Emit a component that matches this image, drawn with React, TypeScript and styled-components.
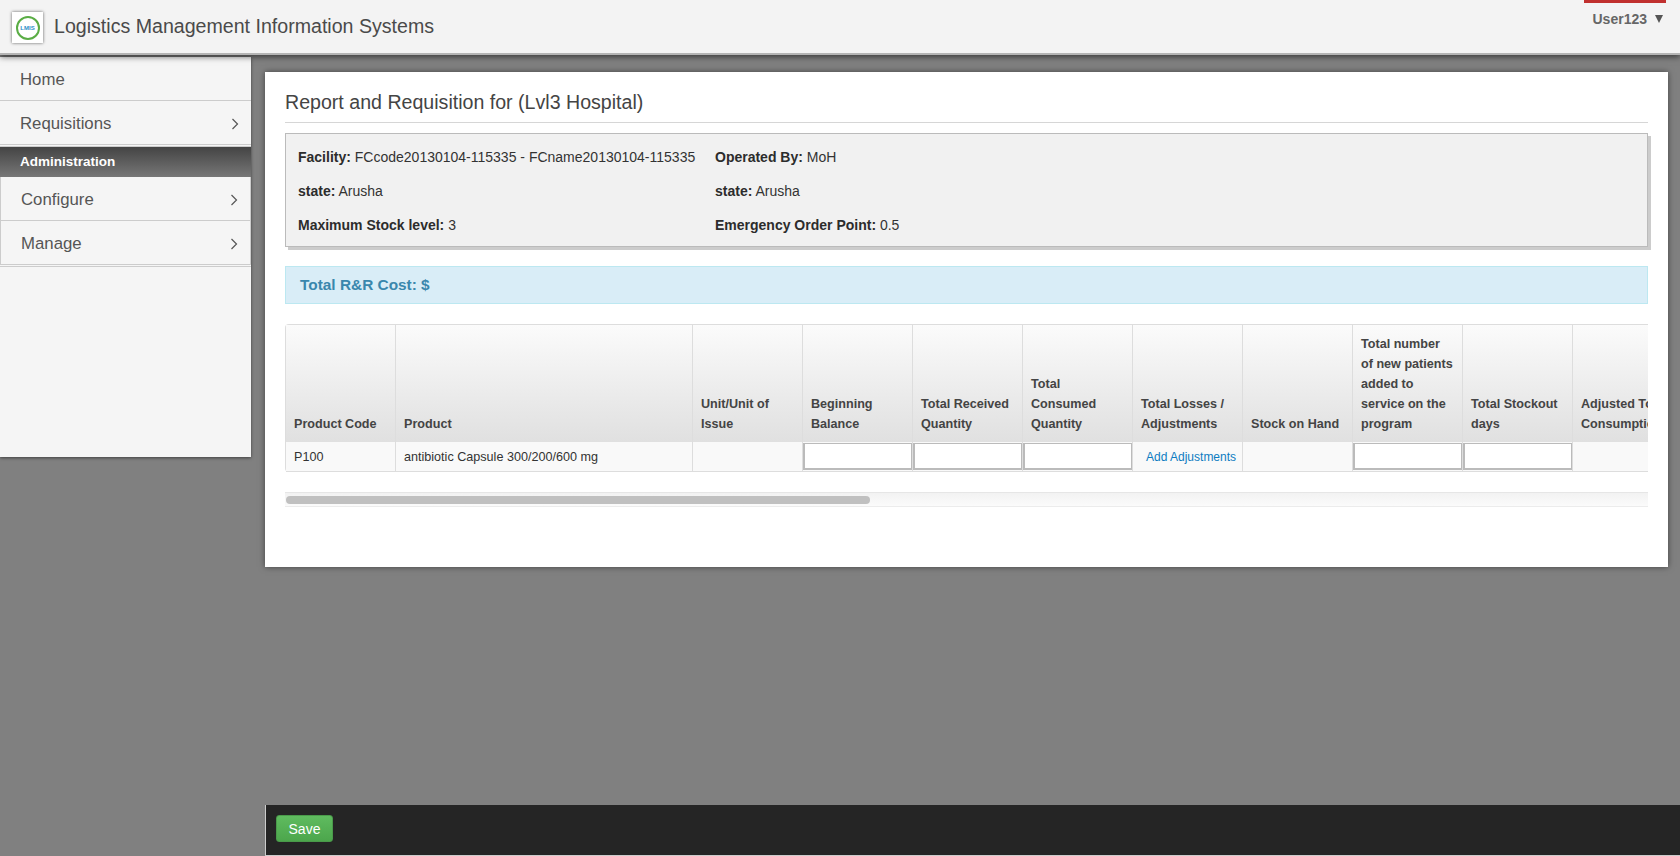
import React from "react";
import styled, { createGlobalStyle } from "styled-components";

const Global = createGlobalStyle`
  html, body { margin: 0; padding: 0; height: 100%; }
  body { background: #808080; font-family: "Liberation Sans", Arial, sans-serif; color: #333; overflow: hidden; }
`;

const Page = styled.div`
  display: flex;
  flex-direction: column;
  height: 856px;
  width: 1680px;
  overflow: hidden;
`;

const Header = styled.header`
  position: relative;
  z-index: 3;
  flex: none;
  height: 53px;
  display: flex;
  align-items: flex-start;
  background: #f3f3f3;
  border-bottom: 2px solid #b4b4b4;
  box-shadow: 0 2px 6px rgba(0, 0, 0, 0.55);
`;

const LogoTile = styled.div`
  margin: 12px 0 0 12px;
  width: 31px;
  height: 31px;
  background: #fff;
  box-shadow: 0 0 3px rgba(0, 0, 0, 0.6);
  display: flex;
  align-items: center;
  justify-content: center;
`;

const LogoRing = styled.div`
  width: 24px;
  height: 24px;
  box-sizing: border-box;
  border: 2.5px solid #5aad45;
  border-radius: 50%;
  display: flex;
  align-items: center;
  justify-content: center;
  font-size: 6px;
  font-weight: 700;
  color: #2a8fc8;
`;

const Brand = styled.div`
  margin: 15px 0 0 11px;
  font-size: 19.6px;
  line-height: 22px;
  color: #4a4a4a;
`;

const UserMenu = styled.div`
  margin-left: auto;
  margin-right: 14px;
  width: 82px;
  height: 37px;
  box-sizing: border-box;
  border-top: 3px solid #c0302e;
  display: flex;
  align-items: flex-start;
  justify-content: flex-end;
  padding-top: 7px;
  gap: 8px;
  font-size: 14px;
  line-height: 18px;
  font-weight: 700;
  color: #666;
`;

const Caret = styled.span`
  margin: 5px 3px 0 0;
  width: 0;
  height: 0;
  border-left: 4px solid transparent;
  border-right: 4px solid transparent;
  border-top: 8px solid #555;
`;

const Body = styled.div`
  flex: 1;
  display: flex;
  align-items: flex-start;
  min-height: 0;
`;

const Sidebar = styled.nav`
  flex: none;
  margin-top: 2px;
  width: 251px;
  height: 400px;
  background: #f5f5f5;
  box-shadow: 0 1px 3px rgba(0, 0, 0, 0.5);
`;

const NavRow = styled.div<{ $inset?: boolean }>`
  height: 43px;
  box-sizing: border-box;
  box-sizing: content-box;
  height: 41px;
  display: flex;
  align-items: center;
  justify-content: space-between;
  padding: 2px 12px 0 20px;
  border-bottom: 1px solid #ccc;
  border-left: ${(p) => (p.$inset ? "1px solid #ccc" : "0")};
  border-right: ${(p) => (p.$inset ? "1px solid #ccc" : "0")};
  font-size: 16.8px;
  color: #555;
`;

const NavHead = styled.div`
  margin-top: 1px;
  border-top: 1px solid #ccc;
  height: 31px;
  box-sizing: border-box;
  padding: 0 0 2px 20px;
  display: flex;
  align-items: center;
  background: linear-gradient(#444, #777);
  color: #fff;
  font-size: 13.5px;
  font-weight: 700;
`;

const NavEnd = styled.div`
  height: 1px;
  margin-top: 1px;
  background: #ccc;
`;

const Chevron = () => (
  <svg width="8" height="12" viewBox="0 0 8 12" fill="none" stroke="#555" strokeWidth="1.2">
    <path d="M1.5 1l5 5-5 5" />
  </svg>
);

const Main = styled.main`
  flex: 1;
  min-width: 0;
  height: 100%;
  display: flex;
  flex-direction: column;
  justify-content: space-between;
  padding-left: 14px;
`;

const Card = styled.section`
  margin-top: 17px;
  width: 1403px;
  height: 495px;
  box-sizing: border-box;
  padding: 0 20px;
  background: #fff;
  box-shadow: 0 0 6px rgba(0, 0, 0, 0.5);
`;

const Title = styled.h1`
  margin: 0;
  height: 50px;
  box-sizing: content-box;
  border-bottom: 1px solid #d6d6d6;
  font-size: 19.6px;
  font-weight: 400;
  line-height: 22px;
  color: #444;
  display: flex;
  align-items: flex-end;
  & > span { display: block; padding-bottom: 9px; }
`;

const InfoBox = styled.div`
  margin-top: 10px;
  height: 114px;
  box-sizing: border-box;
  padding: 6px 12px;
  display: grid;
  grid-template-columns: 417px 1fr;
  grid-auto-rows: 34px;
  align-items: center;
  background: #f1f1f1;
  border: 1px solid #bbb;
  box-shadow: 3px 3px 0 #ccc;
  font-size: 14px;
  color: #333;
  & b { color: #2c2c2c; }
`;

const CostBar = styled.div`
  margin-top: 19px;
  height: 38px;
  box-sizing: border-box;
  padding-left: 14px;
  display: flex;
  align-items: center;
  background: #d9edf7;
  border: 1px solid #bce8f1;
  font-size: 15.4px;
  font-weight: 700;
  color: #3a87ad;
`;

const TableScroll = styled.div`
  margin-top: 20px;
  overflow: hidden;
`;

const Table = styled.table`
  border-collapse: separate;
  border-spacing: 0;
  table-layout: fixed;
  width: 1412px;
  font-size: 12.6px;
  color: #333;
  border-top: 1px solid #ddd;
  border-left: 1px solid #ddd;
  border-radius: 4px 0 0 4px;
`;

const Th = styled.th`
  height: 117px;
  box-sizing: border-box;
  padding: 0 8px 8px;
  vertical-align: bottom;
  text-align: left;
  font-weight: 700;
  line-height: 20px;
  color: #444;
  background: linear-gradient(#fbfbfb, #e0e0e0);
  border-right: 1px solid #ddd;
`;

const Td = styled.td`
  height: 30px;
  box-sizing: border-box;
  padding: 0 8px;
  background: #f9f9f9;
  border-right: 1px solid #ddd;
  border-bottom: 1px solid #ddd;
`;

const InputTd = styled(Td)`
  padding: 1px 0;
`;

const QtyInput = styled.input`
  display: block;
  width: 100%;
  height: 27px;
  box-sizing: border-box;
  border: 1px solid #bbb;
  border-width: 1px 1px 2px 2px;
  background: #fff;
  outline: none;
`;

const AdjustLink = styled.a`
  display: block;
  padding-left: 5px;
  color: #0d7cc1;
  font-size: 12px;
  white-space: nowrap;
`;

const Scrollbar = styled.div`
  margin-top: 20px;
  height: 15px;
  padding-top: 3px;
  box-sizing: border-box;
  border-top: 1px solid #e6e6e6;
  border-bottom: 1px solid #ececec;
  background: linear-gradient(#f2f2f2, #fbfbfb);
`;

const Thumb = styled.div`
  width: 584px;
  margin-left: 1px;
  height: 8px;
  border-radius: 4px;
  background: #c0c0c0;
`;

const Footer = styled.footer`
  flex: none;
  height: 51px;
  box-sizing: border-box;
  padding: 10px 0 0 10px;
  background: #252525;
  border-left: 1px solid #ccc;
  border-bottom: 1px solid #ccc;
`;

const SaveButton = styled.button`
  display: block;
  width: 57px;
  height: 27px;
  padding: 0;
  border: 1px solid #4a9a4a;
  border-radius: 3px;
  background: linear-gradient(#5fbb5f, #4ca64c);
  color: #fff;
  font: 14px "Liberation Sans", Arial, sans-serif;
`;

const columns: { label: React.ReactNode; width: number }[] = [
  { label: "Product Code", width: 110 },
  { label: "Product", width: 297 },
  { label: "Unit/Unit of Issue", width: 110 },
  { label: "Beginning Balance", width: 110 },
  { label: "Total Received Quantity", width: 110 },
  { label: "Total Consumed Quantity", width: 110 },
  { label: "Total Losses / Adjustments", width: 110 },
  { label: "Stock on Hand", width: 110 },
  { label: <>Total number<br />of new patients added to service on the program</>, width: 110 },
  { label: "Total Stockout days", width: 110 },
  { label: "Adjusted Total Consumption", width: 125 },
];

export default function App() {
  return (
    <Page>
      <Global />
      <Header>
        <LogoTile>
          <LogoRing>LMIS</LogoRing>
        </LogoTile>
        <Brand>Logistics Management Information Systems</Brand>
        <UserMenu>
          User123
          <Caret />
        </UserMenu>
      </Header>
      <Body>
        <Sidebar>
          <NavRow>Home</NavRow>
          <NavRow>
            Requisitions
            <Chevron />
          </NavRow>
          <NavHead>Administration</NavHead>
          <NavRow $inset>
            Configure
            <Chevron />
          </NavRow>
          <NavRow $inset>
            Manage
            <Chevron />
          </NavRow>
          <NavEnd />
        </Sidebar>
        <Main>
          <Card>
            <Title>
              <span>Report and Requisition for (Lvl3 Hospital)</span>
            </Title>
            <InfoBox>
              <div><b>Facility:</b> FCcode20130104-115335 - FCname20130104-115335</div>
              <div><b>Operated By:</b> MoH</div>
              <div><b>state:</b> Arusha</div>
              <div><b>state:</b> Arusha</div>
              <div><b>Maximum Stock level:</b> 3</div>
              <div><b>Emergency Order Point:</b> 0.5</div>
            </InfoBox>
            <CostBar>Total R&amp;R Cost: $</CostBar>
            <TableScroll>
              <Table>
                <colgroup>
                  {columns.map((c, i) => (
                    <col key={i} style={{ width: c.width }} />
                  ))}
                </colgroup>
                <thead>
                  <tr>
                    {columns.map((c, i) => (
                      <Th key={i}>{c.label}</Th>
                    ))}
                  </tr>
                </thead>
                <tbody>
                  <tr>
                    <Td>P100</Td>
                    <Td>antibiotic Capsule 300/200/600 mg</Td>
                    <Td />
                    <InputTd><QtyInput /></InputTd>
                    <InputTd><QtyInput /></InputTd>
                    <InputTd><QtyInput /></InputTd>
                    <Td><AdjustLink>Add Adjustments</AdjustLink></Td>
                    <Td />
                    <InputTd><QtyInput /></InputTd>
                    <InputTd><QtyInput /></InputTd>
                    <Td />
                  </tr>
                </tbody>
              </Table>
            </TableScroll>
            <Scrollbar>
              <Thumb />
            </Scrollbar>
          </Card>
          <Footer>
            <SaveButton>Save</SaveButton>
          </Footer>
        </Main>
      </Body>
    </Page>
  );
}
